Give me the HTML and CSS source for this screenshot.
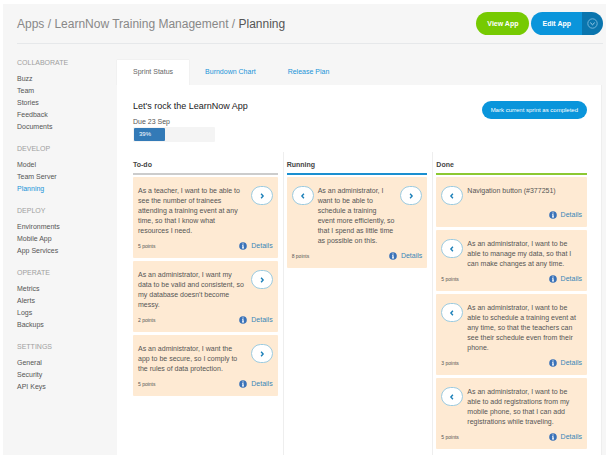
FILE: index.html
```html
<!DOCTYPE html>
<html lang="en">
<head>
    <meta charset="UTF-8">
    <title>LearnNow Training Management - Planning</title>
    <meta name="viewport" content="width=device-width, initial-scale=1.0">
    <link rel="stylesheet" href="styles.css">
</head>
<body>

    <!-- Shared icons -->
    <svg class="icon-defs" aria-hidden="true">
        <symbol id="icon-left" viewBox="0 0 6 6"><path d="M3.9 .8 1.9 3l2 2.2" fill="none" stroke="currentColor" stroke-width="1.4"/></symbol>
        <symbol id="icon-right" viewBox="0 0 6 6"><path d="M2.1 .8 4.1 3l-2 2.2" fill="none" stroke="currentColor" stroke-width="1.4"/></symbol>
        <symbol id="icon-info" viewBox="0 0 8 8"><circle cx="4" cy="4" r="3.8" fill="#3a72b8"/><path d="M3.4 1.4h1.2v1.1H3.4zM3 3.2h1.6v2.4H5v.8H3v-.8h.4V4H3z" fill="#fff"/></symbol>
    </svg>

    <div class="app">
        <header class="header">
            <h1 class="breadcrumb"><a href="#">Apps</a> / <a href="#">LearnNow Training Management</a> / <span>Planning</span></h1>
            <div class="header-buttons">
                <button class="btn btn-view">View App</button>
                <div class="split">
                    <button class="btn btn-edit">Edit App</button>
                    <button class="btn btn-more" aria-label="More options">
                        <svg width="11" height="11" viewBox="0 0 11 11"><circle cx="5.5" cy="5.5" r="4.7" fill="none" stroke="#8cc4e4" stroke-width=".8"/><path d="M3.3 4.7l2.2 2.1 2.2-2.1" fill="none" stroke="#b9dcf0" stroke-width=".9"/></svg>
                    </button>
                </div>
            </div>
        </header>

        <div class="main">
            <nav class="sidebar">
                <h2>COLLABORATE</h2>
                <ul>
                    <li><a href="#">Buzz</a></li>
                    <li><a href="#">Team</a></li>
                    <li><a href="#">Stories</a></li>
                    <li><a href="#">Feedback</a></li>
                    <li><a href="#">Documents</a></li>
                </ul>
                <h2>DEVELOP</h2>
                <ul>
                    <li><a href="#">Model</a></li>
                    <li><a href="#">Team Server</a></li>
                    <li><a href="#" class="current">Planning</a></li>
                </ul>
                <h2>DEPLOY</h2>
                <ul>
                    <li><a href="#">Environments</a></li>
                    <li><a href="#">Mobile App</a></li>
                    <li><a href="#">App Services</a></li>
                </ul>
                <h2>OPERATE</h2>
                <ul>
                    <li><a href="#">Metrics</a></li>
                    <li><a href="#">Alerts</a></li>
                    <li><a href="#">Logs</a></li>
                    <li><a href="#">Backups</a></li>
                </ul>
                <h2>SETTINGS</h2>
                <ul>
                    <li><a href="#">General</a></li>
                    <li><a href="#">Security</a></li>
                    <li><a href="#">API Keys</a></li>
                </ul>
            </nav>

            <main class="content">
                <div class="tabs">
                    <a href="#" class="tab active">Sprint Status</a>
                    <a href="#" class="tab">Burndown Chart</a>
                    <a href="#" class="tab">Release Plan</a>
                </div>

                <div class="panel">
                    <div class="sprint">
                        <div>
                            <h2 class="sprint-title">Let's rock the LearnNow App</h2>
                            <div class="due">Due 23 Sep</div>
                            <div class="progress">
                                <div class="progress-bar" style="width: 39%">39%</div>
                            </div>
                        </div>
                        <button class="btn btn-complete">Mark current sprint as completed</button>
                    </div>

                    <!-- Sprint board -->
                    <div class="board">
                        <section class="column todo">
                            <h3>To-do</h3>
                            <article class="card">
                                <div class="card-body">
                                    <p>As a teacher, I want to be able to see the number of trainees attending a training event at any time, so that I know what resources I need.</p>
                                    <button class="move" aria-label="Move right"><svg><use href="#icon-right"/></svg></button>
                                </div>
                                <div class="card-footer">
                                    <span class="points">5 points</span>
                                    <a href="#" class="details"><svg><use href="#icon-info"/></svg>Details</a>
                                </div>
                            </article>
                            <article class="card">
                                <div class="card-body">
                                    <p>As an administrator, I want my data to be valid and consistent, so my database doesn't become messy.</p>
                                    <button class="move" aria-label="Move right"><svg><use href="#icon-right"/></svg></button>
                                </div>
                                <div class="card-footer">
                                    <span class="points">2 points</span>
                                    <a href="#" class="details"><svg><use href="#icon-info"/></svg>Details</a>
                                </div>
                            </article>
                            <article class="card">
                                <div class="card-body">
                                    <p>As an administrator, I want the app to be secure, so I comply to the rules of data protection.</p>
                                    <button class="move" aria-label="Move right"><svg><use href="#icon-right"/></svg></button>
                                </div>
                                <div class="card-footer">
                                    <span class="points">5 points</span>
                                    <a href="#" class="details"><svg><use href="#icon-info"/></svg>Details</a>
                                </div>
                            </article>
                        </section>

                        <section class="column running">
                            <h3>Running</h3>
                            <article class="card">
                                <div class="card-body">
                                    <button class="move" aria-label="Move left"><svg><use href="#icon-left"/></svg></button>
                                    <p>As an administrator, I want to be able to schedule a training event&nbsp;more efficiently, so that I spend as little time as possible on this.</p>
                                    <button class="move" aria-label="Move right"><svg><use href="#icon-right"/></svg></button>
                                </div>
                                <div class="card-footer">
                                    <span class="points">8 points</span>
                                    <a href="#" class="details"><svg><use href="#icon-info"/></svg>Details</a>
                                </div>
                            </article>
                        </section>

                        <section class="column done">
                            <h3>Done</h3>
                            <article class="card">
                                <div class="card-body">
                                    <button class="move" aria-label="Move left"><svg><use href="#icon-left"/></svg></button>
                                    <p>Navigation button (#377251)</p>
                                </div>
                                <div class="card-footer">
                                    <a href="#" class="details"><svg><use href="#icon-info"/></svg>Details</a>
                                </div>
                            </article>
                            <article class="card">
                                <div class="card-body">
                                    <button class="move" aria-label="Move left"><svg><use href="#icon-left"/></svg></button>
                                    <p>As an administrator, I want to be able to manage my data, so that I can make changes at any time.</p>
                                </div>
                                <div class="card-footer">
                                    <span class="points">5 points</span>
                                    <a href="#" class="details"><svg><use href="#icon-info"/></svg>Details</a>
                                </div>
                            </article>
                            <article class="card">
                                <div class="card-body">
                                    <button class="move" aria-label="Move left"><svg><use href="#icon-left"/></svg></button>
                                    <p>As an administrator, I want to be able to schedule a training event at any time, so that the teachers can see their schedule even from their phone.</p>
                                </div>
                                <div class="card-footer">
                                    <span class="points">3 points</span>
                                    <a href="#" class="details"><svg><use href="#icon-info"/></svg>Details</a>
                                </div>
                            </article>
                            <article class="card">
                                <div class="card-body">
                                    <button class="move" aria-label="Move left"><svg><use href="#icon-left"/></svg></button>
                                    <p>As an administrator, I want to be able to add registrations from my mobile phone, so that I can add registrations while traveling.</p>
                                </div>
                                <div class="card-footer">
                                    <span class="points">5 points</span>
                                    <a href="#" class="details"><svg><use href="#icon-info"/></svg>Details</a>
                                </div>
                            </article>
                        </section>
                    </div>
                </div>
            </main>
        </div>
    </div>

</body>
</html>
```
FILE: styles.css
```css
* {
    box-sizing: border-box;
}
body {
    margin: 4px 3px 9px;
    background-color: #ffffff;
    color: #555555;
    font-family: "Liberation Sans", Arial, sans-serif;
    font-size: 7px;
    line-height: 10px;
}
h1, h2, h3, p, ul {
    margin: 0;
    padding: 0;
    font-weight: normal;
}
a {
    color: #1a94d8;
    text-decoration: none;
}
.icon-defs {
    display: none;
}
.app {
    background-color: #f6f6f6;
}

/* Header */
.header {
    display: flex;
    justify-content: space-between;
    align-items: center;
    margin: 0 3px 0 14px;
    height: 40px;
    border-bottom: 1px solid #e6e8ea;
}
.breadcrumb {
    font-size: 12px;
    line-height: 14px;
    color: #888888;
}
.breadcrumb a {
    color: #888888;
}
.breadcrumb span {
    color: #555555;
}
.header-buttons {
    display: flex;
    gap: 2px;
}
.btn {
    border: 0;
    padding: 0 11px;
    height: 23px;
    border-radius: 12px;
    color: #ffffff;
    font-family: inherit;
    font-size: 7px;
    font-weight: bold;
    cursor: pointer;
}
.btn-view {
    background-color: #76ca02;
}
.split {
    display: flex;
}
.btn-edit {
    background-color: #0a95db;
    border-radius: 12px 0 0 12px;
}
.btn-more {
    display: flex;
    align-items: center;
    justify-content: center;
    width: 21px;
    padding: 0;
    background-color: #0a75ae;
    border-radius: 0 12px 12px 0;
}

/* Sidebar */
.main {
    display: flex;
}
.sidebar {
    flex: 0 0 114px;
    padding: 14px 14px 0;
}
.sidebar h2 {
    font-size: 7px;
    line-height: 10px;
    color: #a0a0a0;
    margin-bottom: 5px;
}
.sidebar ul {
    list-style: none;
    margin-bottom: 11px;
}
.sidebar li {
    line-height: 12px;
}
.sidebar a {
    color: #555555;
}
.sidebar a.current {
    color: #1a94d8;
}

/* Content */
.content {
    flex: 1;
    min-width: 0;
    padding: 16px 4px 0 0;
    display: flex;
    flex-direction: column;
}
.tabs {
    display: flex;
}
.tab {
    padding: 7px 16px 8px;
}
.tab.active {
    background-color: #ffffff;
    color: #666666;
    box-shadow: 0 0 1px #dddddd;
    clip-path: inset(-1px -1px 0);
}
.panel {
    flex: 1;
    background-color: #ffffff;
    padding: 15px 14px 0 16px;
    border-right: 1px solid #eeeeee;
}
.sprint {
    display: flex;
    justify-content: space-between;
    align-items: flex-start;
    margin-bottom: 10px;
}
.sprint-title {
    font-size: 9px;
    line-height: 12px;
    color: #222222;
    margin-bottom: 5px;
}
.progress {
    width: 82px;
    height: 15px;
    padding: 1px;
    background-color: #f4f4f4;
    border-radius: 1px;
}
.progress-bar {
    height: 13px;
    padding-left: 5px;
    background-color: #337ab7;
    border-radius: 1px;
    color: #ffffff;
    font-size: 6px;
    line-height: 13px;
}
.btn-complete {
    height: 18px;
    padding: 0 9px;
    margin-top: 1px;
    background-color: #0a95db;
    font-size: 6px;
    font-weight: normal;
}

/* Board */
.board {
    display: grid;
    grid-template-columns: 151fr 150fr 154fr;
}
.column {
    padding: 8px 5px 6px 3px;
    border-right: 1px solid #eeeeee;
}
.column:first-child {
    padding-left: 0;
}
.column:last-child {
    padding-right: 0;
    border-right: 0;
}
.column h3 {
    font-size: 7px;
    line-height: 10px;
    font-weight: bold;
    color: #444444;
    padding-bottom: 3px;
    border-bottom: 2px solid #cccccc;
    margin-bottom: 2px;
}
.running h3 {
    border-color: #1a8fd0;
}
.done h3 {
    border-color: #8cc832;
}
.card {
    background-color: #feead3;
    padding: 9px 5px 7px;
    margin-bottom: 3px;
    border-radius: 1px;
}
.card:last-child {
    margin-bottom: 0;
}
.card-body {
    display: flex;
    align-items: flex-start;
    gap: 4px;
    margin-bottom: 5px;
}
.todo .card-body {
    gap: 6px;
}
.card-body p {
    flex: 1;
}
.move {
    display: flex;
    align-items: center;
    justify-content: center;
    flex: 0 0 22px;
    height: 19px;
    padding: 0;
    background-color: #ffffff;
    border: 1px solid #9ccbe0;
    border-radius: 10px;
    color: #1a7fb8;
    cursor: pointer;
}
.move svg {
    width: 6px;
    height: 6px;
}
.card-footer {
    display: flex;
    align-items: center;
}
.points {
    font-size: 5px;
}
.details {
    display: flex;
    align-items: center;
    gap: 4px;
    margin-left: auto;
    color: #3a86b8;
}
.details svg {
    width: 8px;
    height: 8px;
}
```
